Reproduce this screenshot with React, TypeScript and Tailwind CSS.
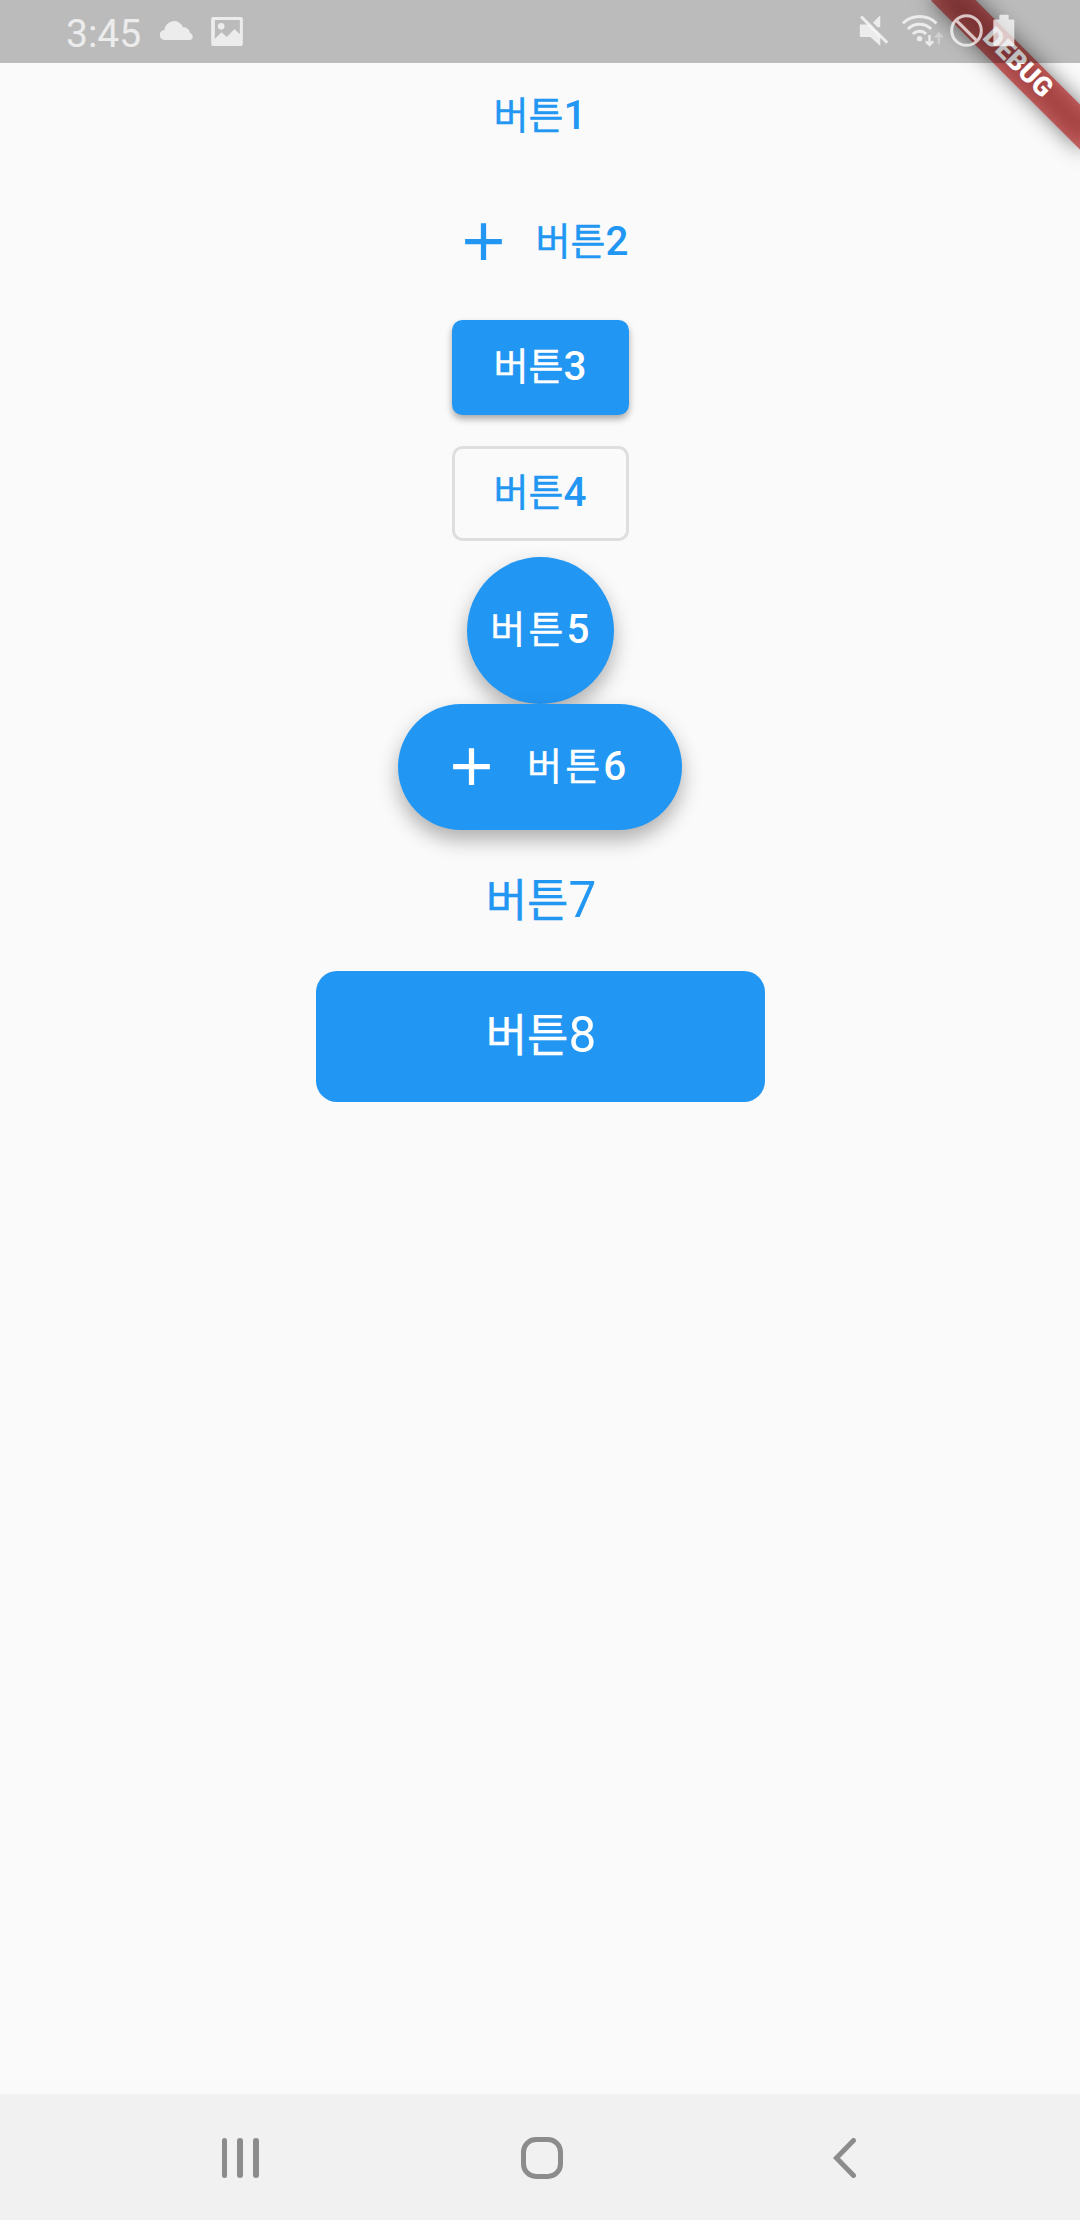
import type { ReactNode } from "react";

const koreanFont = "font-['Roboto','Noto_Sans_CJK_KR',sans-serif]";

function CloudIcon() {
  return (
    <svg viewBox="360 63 102 57" className="w-[34px] h-[19px]" fill="currentColor">
      <path d="M375 120 a15 15 0 0 1 -2 -30 a29 29 0 0 1 56 -8 a20 20 0 0 1 21 17 a11 11 0 0 1 1 21 Z" />
    </svg>
  );
}

function ImageIcon() {
  return (
    <svg viewBox="513 51 95 87" className="w-[32px] h-[29px]" fill="currentColor">
      <path
        fillRule="evenodd"
        d="M519 51 H602 Q608 51 608 57 V132 Q608 138 602 138 H519 Q513 138 513 132 V57 Q513 51 519 51 Z M524 60 V117 L544 97 L560 111 L583 87 L599 103 V60 Z"
      />
      <circle cx="543" cy="79" r="10" />
    </svg>
  );
}

function MuteIcon() {
  return (
    <svg viewBox="84 44 90 100" className="w-[30px] h-[33px]" fill="currentColor">
      <path d="M126 70 L148 48 V84 H140 Z" />
      <path d="M88 76 H103 L114 76 L148 110 V141 L118 114 H90 Q86 114 86 110 V79 Q86 76 88 76 Z" />
      <path d="M90 52 L169 131" stroke="currentColor" strokeWidth="9" />
    </svg>
  );
}

function WifiIcon() {
  return (
    <svg viewBox="210 41 128 102" className="w-[43px] h-[34px]" fill="none" stroke="currentColor">
      <path d="M215 69 A72 72 0 0 1 316 69" strokeWidth="9" />
      <path d="M230 86 A50 50 0 0 1 300 86" strokeWidth="9" />
      <path d="M245 101 A29 29 0 0 1 285 101" strokeWidth="9" />
      <circle cx="265" cy="115" r="8" fill="currentColor" stroke="none" />
      <path d="M295 104 V134 M284 123 L295 134 L306 123" strokeWidth="7" />
      <path d="M323 130 V100 M312 111 L323 100 L334 111" strokeWidth="7" opacity="0.45" />
    </svg>
  );
}

function BlockedIcon() {
  return (
    <svg viewBox="356 42 98 98" className="w-[33px] h-[33px]" fill="none" stroke="currentColor" strokeWidth="9">
      <path d="M449 91 A44 44 0 1 1 361 91 A44 44 0 1 1 449 91 M374 60 L436 122" />
    </svg>
  );
}

function BatteryIcon() {
  return (
    <svg viewBox="488 44 66 98" className="w-[22px] h-[33px]" fill="currentColor">
      <path d="M507 60 V48 Q507 46 510 46 H532 Q535 46 535 48 V60 H548 Q552 60 552 64 V136 Q552 140 548 140 H493 Q489 140 489 136 V64 Q489 60 493 60 Z" />
    </svg>
  );
}

function PlusIcon() {
  return (
    <svg viewBox="0 0 24 24" className="w-[63px] h-[63px] shrink-0" fill="currentColor">
      <path d="M19 13h-6v6h-2v-6H5v-2h6V5h2v6h6v2z" />
    </svg>
  );
}

// 14sp label, digits are medium weight while the hangul stays regular
function Label({ digit, wide }: { digit: string; wide?: boolean }) {
  return (
    <span className={wide ? "pt-px text-[38px] leading-none tracking-[3.2px]" : "pt-px text-[38px] leading-none"}>
      <span className="[-webkit-text-stroke:0.4px_currentColor]">버튼</span>
      <span className="text-[40.4px] leading-none font-medium">{digit}</span>
    </span>
  );
}

// 17sp label of the cupertino buttons
function LargeLabel({ digit }: { digit: string }) {
  return (
    <span className="pl-[2px] text-[45px] leading-none">
      <span className="[-webkit-text-stroke:0.4px_currentColor]">버튼</span>
      <span className="text-[49.5px] leading-none">{digit}</span>
    </span>
  );
}

function Slot({ children }: { children: ReactNode }) {
  return <div className="h-[126px] flex items-center justify-center">{children}</div>;
}

function DebugBanner() {
  return (
    <div className="absolute left-[975px] top-[73.5px] w-[210px] h-[31.5px] origin-[105px_-73.5px] rotate-45">
      <div className="absolute inset-0 bg-black/50 blur-[10.4px]" />
      <div className="relative h-full bg-[#b71c1c]/63 flex items-center justify-center text-white text-[26.8px] leading-none font-black font-['Roboto',sans-serif]">
        <span className="-mt-[3px]">DEBUG</span>
      </div>
    </div>
  );
}

function StatusBar() {
  return (
    <div className="absolute top-0 inset-x-0 h-[63px] bg-black/25 flex justify-between pl-[66px] pr-[65px] text-white/72">
      <div className="flex items-start">
        <span className="mt-[14px] w-[94px] text-[39px] leading-[40px] font-['Roboto',sans-serif]">3:45</span>
        <div className="mt-[21px]"><CloudIcon /></div>
        <div className="mt-[17px] ml-[17px]"><ImageIcon /></div>
      </div>
      <div className="flex items-start pt-[14px]">
        <MuteIcon />
        <div className="ml-[12px]"><WifiIcon /></div>
        <div className="ml-[6px]"><BlockedIcon /></div>
        <div className="ml-[10px]"><BatteryIcon /></div>
      </div>
    </div>
  );
}

function NavBar() {
  return (
    <nav className="h-[126px] bg-[#f1f1f1] flex items-center pl-[221.5px] pt-[4px] pb-[2px] text-[#8c8c8c]">
      <div className="flex gap-[10.7px]">
        <div className="w-[5.3px] h-10 rounded-full bg-current" />
        <div className="w-[5.3px] h-10 rounded-full bg-current" />
        <div className="w-[5.3px] h-10 rounded-full bg-current" />
      </div>
      <div className="ml-[262.2px] w-[42px] h-[42px] rounded-[15px] border-5 border-current" />
      <svg viewBox="0 0 24 40" className="ml-[270px] w-6 h-10" fill="none" stroke="currentColor" strokeWidth="5" strokeLinecap="round">
        <path d="M20.5 2.5 L3.5 20 L20.5 37.5" />
      </svg>
    </nav>
  );
}

export default function App() {
  return (
    <div className={`relative w-[1080px] h-[2220px] bg-[#fafafa] overflow-hidden flex flex-col ${koreanFont}`}>
      <main className="flex-1 flex flex-col items-center pt-[52.5px] text-[#2196f3]">
        <Slot>
          <Label digit="1" />
        </Slot>
        <Slot>
          <div className="flex items-center gap-[21px]">
            <PlusIcon />
            <Label digit="2" />
          </div>
        </Slot>
        <Slot>
          <button className="w-[177px] h-[94.5px] rounded-[10.5px] bg-[#2196f3] text-white shadow-[0_4px_7px_rgba(0,0,0,0.33)]">
            <Label digit="3" />
          </button>
        </Slot>
        <Slot>
          <button className="w-[177px] h-[94.5px] rounded-[10.5px] border-3 border-[#dedede]">
            <Label digit="4" />
          </button>
        </Slot>
        <button className="w-[147px] h-[147px] pl-[3px] rounded-full bg-[#2196f3] text-white shadow-[0_10px_20px_rgba(0,0,0,0.3)]">
          <Label digit="5" wide />
        </button>
        <button className="w-[284px] h-[126px] rounded-full bg-[#2196f3] text-white flex items-center pl-[42px] gap-[24px] shadow-[0_10px_20px_rgba(0,0,0,0.3)]">
          <PlusIcon />
          <Label digit="6" wide />
        </button>
        <button className="h-[141.5px]">
          <LargeLabel digit="7" />
        </button>
        <button className="w-[449px] h-[131px] pb-[2px] rounded-[21px] bg-[#2196f3] text-white">
          <LargeLabel digit="8" />
        </button>
      </main>
      <NavBar />
      <DebugBanner />
      <StatusBar />
    </div>
  );
}
